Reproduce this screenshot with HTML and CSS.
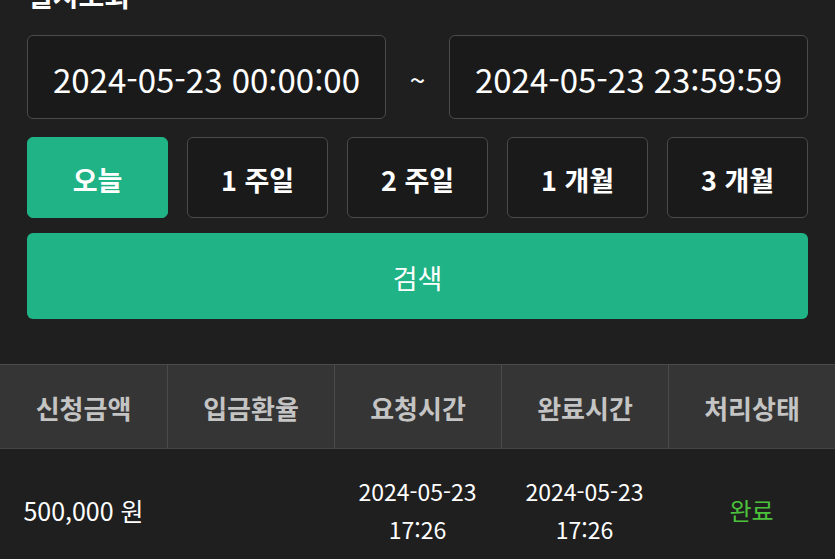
FILE: index.html
```html
<!DOCTYPE html>
<html lang="ko">
<head>
<meta charset="utf-8">
<link rel="stylesheet" href="styles.css">
</head>
<body>
<div class="page">
  <section class="filter">
    <h2 class="title">일시조회</h2>
    <div class="range">
      <div class="date-box">2024-05-23 00:00:00</div>
      <span class="tilde">~</span>
      <div class="date-box">2024-05-23 23:59:59</div>
    </div>
    <div class="periods">
      <button class="period active">오늘</button>
      <button class="period">1 주일</button>
      <button class="period">2 주일</button>
      <button class="period">1 개월</button>
      <button class="period">3 개월</button>
    </div>
    <button class="search">검색</button>
  </section>
  <div class="table">
    <div class="row head">
      <div class="cell">신청금액</div>
      <div class="cell">입금환율</div>
      <div class="cell">요청시간</div>
      <div class="cell">완료시간</div>
      <div class="cell">처리상태</div>
    </div>
    <div class="row body">
      <div class="cell">500,000 원</div>
      <div class="cell"></div>
      <div class="cell">2024-05-23<br>17:26</div>
      <div class="cell">2024-05-23<br>17:26</div>
      <div class="cell done">완료</div>
    </div>
  </div>
</div>
</body>
</html>
```

FILE: styles.css
```css
* { box-sizing: border-box; }
html, body {
  margin: 0;
  padding: 0;
  background: #1f1f1f;
  overflow: hidden;
}
body {
  font-family: "Noto Sans CJK KR", "Noto Sans", sans-serif;
  color: #ffffff;
}
.page {
  width: 835px;
  height: 559px;
  overflow: hidden;
}
.filter {
  padding: 0 27px;
}
.title {
  margin: -25px 0 20px;
  font-size: 28px;
  line-height: 40px;
  font-weight: 700;
  color: #ffffff;
}
.range {
  display: flex;
  align-items: center;
}
.date-box {
  width: 359px;
  height: 84px;
  padding-top: 3px;
  border: 1px solid #4b4b4b;
  border-radius: 6px;
  background: #1a1a1a;
  display: flex;
  align-items: center;
  justify-content: center;
  font-size: 33px;
  color: #ffffff;
}
.tilde {
  flex: 1;
  text-align: center;
  font-size: 28px;
  padding-top: 4px;
  color: #ffffff;
}
.periods {
  display: flex;
  gap: 19px;
  margin-top: 18px;
}
.period {
  flex: 1;
  height: 81px;
  border: 1px solid #4b4b4b;
  border-radius: 6px;
  background: #1a1a1a;
  color: #ffffff;
  font-family: inherit;
  font-size: 27px;
  font-weight: 700;
  padding: 3px 0 0;
}
.period.active {
  background: #20b386;
  border-color: #20b386;
}
.search {
  display: block;
  width: 100%;
  height: 86px;
  margin-top: 15px;
  padding: 3px 0 0;
  border: none;
  border-radius: 6px;
  background: #20b386;
  color: #ffffff;
  font-family: inherit;
  font-size: 27px;
  font-weight: 400;
}
.table {
  margin-top: 45px;
}
.row {
  display: grid;
  grid-template-columns: repeat(5, 1fr);
}
.head {
  background: #353535;
  border-top: 1px solid #4b4b4b;
  border-bottom: 1px solid #444;
  height: 85px;
}
.head .cell {
  display: flex;
  align-items: center;
  justify-content: center;
  padding-top: 2px;
  font-size: 26px;
  font-weight: 700;
  color: #c4c4c4;
  border-left: 1px solid #4b4b4b;
}
.head .cell:first-child { border-left: none; }
.body {
  padding-top: 23px;
}
.body .cell {
  display: flex;
  align-items: center;
  justify-content: center;
  text-align: center;
  font-size: 23px;
  line-height: 38px;
  color: #ffffff;
}
.body .cell:first-child {
  font-size: 25px;
}
.body .cell.done {
  color: #4cc23c;
  font-size: 24px;
}
```
